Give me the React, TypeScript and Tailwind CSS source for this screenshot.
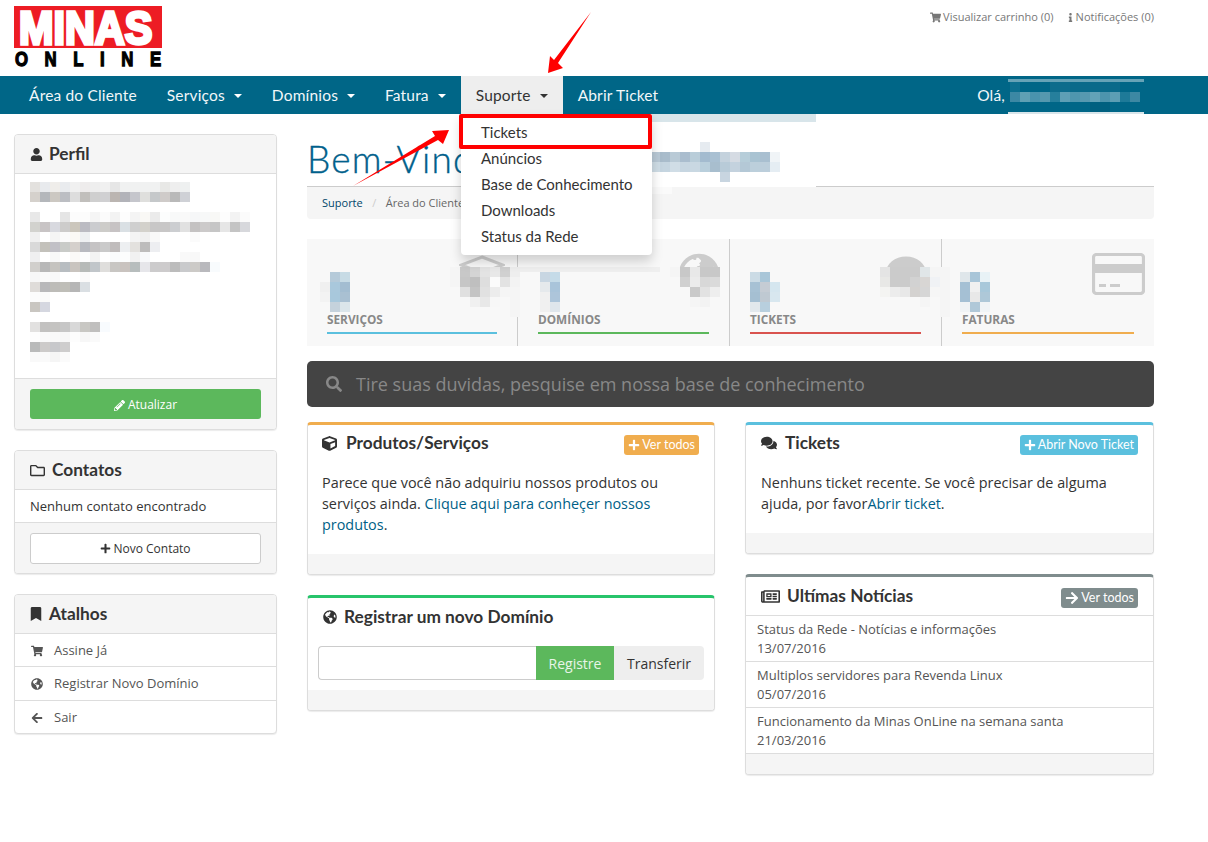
import React from "react";
import {
  FaUser, FaRegFolder, FaBookmark, FaShoppingCart, FaGlobeAmericas, FaArrowLeft, FaCube, FaComments,
  FaRegNewspaper, FaSearch, FaPlus, FaPencilAlt, FaArrowRight, FaInfo, FaComment,
} from "react-icons/fa";

type Cell = string;

function Mosaic({ rows, cell = 10, x, y }: { rows: Cell[][]; cell?: number; x?: number; y?: number }) {
  const w = Math.max(...rows.map((r) => r.length)) * cell;
  const pos = x !== undefined ? { left: x, top: y } : undefined;
  return (
    <svg width={w} height={rows.length * cell} className={pos ? "absolute block" : "block"} style={pos} shapeRendering="crispEdges">
      {rows.map((r, j) =>
        r.map((c, i) => (c ? <rect key={`${i}-${j}`} x={i * cell} y={j * cell} width={cell} height={cell} fill={`#${c}`} /> : null)),
      )}
    </svg>
  );
}

const s = (t: string) => (t ? t.split(" ").map((c) => (c === "-" ? "" : c)) : []);

const profile = [
  "e3e1de e8eaed efedea e9ebee f0f0f0 eeecec eeeeee f0f0f0 e6e6e6 f0f1f1 f0f1f1 f0f1f1 f0f1f1 e8e8e6 eeeeee eef0f0",
  "d5d1cc b4b7bb ccc8c2 bcbec3 dddddd c1bfbc cfcfcf d0d0d2 bbb5b1 b2b3b9 c5c6cc dfdfdd c5c8ca cfcbc9 b9b9b9 cfd1d6",
  "",
  "e8e8e8 - - e5e5e5 fcfcfc fcfcfc f5f5f5 fbfbfb f3f3f3 fdfdfd f4f4f4 f9f8f5 ebebeb fcfdfd f8f9f9 f9f9f9 f6f7f8 f7f8f8 f8f8f6 fdfdfd f3f3f3 fbfbfb",
  "d2d2ce c8c4c5 d8d9df cdcccb cbc6bc bbbbc2 cbcccf cdccc9 c7c3c4 dae0e4 cfcfcf d3d1cb c8c7c7 c8c7c7 ccced1 e1e1e1 c4c2c2 cccaca c6c6c6 e6e6e6 c4c4c4 d7d8dc",
  "f0f0f0 - f5f5f5 fbfbfb fbf9f5 eef0f2 - - - - f4f4f4 f0f0f0 f9f9f9 - - - fbfbfb",
  "d9d9d9 c3c1bb c1c0c6 c9cbc8 d5d0cc b8bac0 c5c3c4 cacaca c0bcbc edeff1 e3e1de bdbcbc edeef1",
  "efeff0 - f8f8f8 - fbf9f7 fcfdfd f3f3f3 - fafbfc fcfdfd f1f1f1 f8f9fb - - - f9f9f9 f8f8f8",
  "d1cfcc b8b8b8 c5c3bf b8bdc1 c9c4bf b6bab8 c1c6ca dfdedc c8c6c3 c9c3bf b7bdbd e6e6ea cccbcc cdcbcc bcbcbc c9cacc cccac7 b9b9bd f8fbfd",
  "f7f7f7 fafafa f9f9f9 - - fafafa",
  "dfdcd9 b8b8ba bdbcb8 bfbeb8 b6b6b6 dadfe3",
  "fcfcfc fafafa",
  "c9c6c1 d5d7e0",
  "",
  "e2e1e0 c2c1c0 c4c3c1 c6c6c6 d8d8d8 c8c7c3 c0bfbe f8fbfe",
  "fdfdfd fafafa f9f9f9 f7f7f7 fdfdfd f7f7f7 fafafa",
  "b9baba cdcbca c7c8cb cecdcd",
  "f9f9f9 fafafa f5f5f5 fbfbfb",
].map(s);

const F = "f8f8f8";
const overlays: { x: number; y: number; rows: string[] }[] = [
  { x: 320, y: 272, rows: ["- b5cad9 c7dbe5", "f0f0f0 a9c8dc a3bdd1", "f3f3f3 a8c8dc a9c0d2", "- c5d2dc dbe5ea"] },
  { x: 450, y: 267, rows: [`f5f5f5 c8c8c8 d4d4d4 e3e3e3 e8e8e8 d0d0d0 eeeeee`, `f5f5f5 c6c6c6 bfbfbf dedede fbfbfb e3e3e3 f3f3f3`, `${F} e0e0e0 c4c4c4 e1e1e1 ececec f5f5f5 f5f5f5`, `${F} ${F} f0f0f0 e8e8e8 f7f7f7 ${F} f5f5f5`, `${F} ${F} ${F} ${F} ${F} ${F} f5f5f5`] },
  { x: 540, y: 272, rows: ["c8d6e2 c5dbe8", "e5e9ec a9c4da", "f0f0f0 adc5da", "f0f0f0 dfe6ec"] },
  { x: 670, y: 267, rows: [`f5f5f5 c8c8c8 e8e8e8 c8c8c8 c8c8c8`, `${F} d0d0d0 ebebeb d8d8d8 dadada`, `${F} ${F} c9c9c9 e2e2e2 eeeeee`, `${F} ${F} f5f5f5 f3f3f3 ${F}`] },
  { x: 750, y: 272, rows: ["cbdbe5 a9c6d8", "a7c1d4 c5ccd4 d5e6ef", "a5bfd2 bfc9d2 d8e7ef", "e2e8ec b8cfde"] },
  { x: 880, y: 267, rows: [`e4e4e4 cbcbcb cbcbcb cbcbcb e0e6e8 f5f5f5 f5f5f5`, `e8e8e6 cbcbcb cbcbcb d2d2d2 d8d6d4 f0f2f5 f5f5f5`, `f4f4f2 ececec e8e8e8 d4d2d0 d6d6d6 f6f6f6 f5f5f5`, `${F} ${F} ${F} ${F} f5f5f5 ${F} f5f5f5`, `${F} ${F} ${F} ${F} ${F} ${F} f5f5f5`] },
  { x: 960, y: 272, rows: ["dfe6ea a8c5d8 e8f2f6", "a5c0d4 f0f0f0 a8c8da", "a5c0d4 e8e8e8 aec8d8", "f0f3f5 b0c8d8 f0f4f6"] },
];

const headingMosaic = [
  "- - - - - e6ebf0",
  "b9c9d6 a9bccb b9cad6 aabdce b9cdd9 a3bbcf a9c0d2 c4d2dd d5dbe3 b6cdd9 a9c3d2 a9bfd0 f0f4f7",
  "cfdde6 c5d5e0 d0dde6 c7d6e1 c9d8e2 b9cfdc a8bece b8cbd8 c4d2de b4c8d6 bccfdb bccedb e5edf3",
  "- - - - - - - c8d5e0",
].map(s);

const olaMosaic = [
  "0c6f8f - - - 0d6c8c 0d6c8c 0a6a8a 0a6a8a 0a6a8a 0a6a8a 0a6a8a",
  "3c88a4 5fa0b4 4a93ad 5598ae 267f9c 5e9fb5 4f96ae 5799b0 62a2b7 4d94ad 5c9eb4 1e7a98 3d88a3",
  "- - - - - - - - 006080 006080",
].map(s);

const Panel = ({ children, className = "" }: { children: React.ReactNode; className?: string }) => (
  <div className={`bg-white border border-[#ddd] rounded-[4px] shadow-[0_1px_1px_rgba(0,0,0,0.08)] overflow-hidden ${className}`}>{children}</div>
);

const SideHead = ({ icon, title, gap }: { icon: React.ReactNode; title: string; gap: string }) => (
  <div className={`h-[39px] bg-[#f5f5f5] border-b border-[#ddd] flex items-center pl-[15px] ${gap} text-[#333] font-bold text-[17.3px] font-['Lato','Liberation_Sans',sans-serif]`}>
    {icon}
    <span>{title}</span>
  </div>
);

const NavItem = ({ label, caret }: { label: string; caret?: boolean }) => (
  <div className="h-full flex items-center px-[15px] text-[#f2f7f9]">
    <span className="pt-[1px]">{label}</span>
    {caret && <span className="ml-[9px] mt-[2px] w-0 h-0 border-x-4 border-x-transparent border-t-4 border-t-white" />}
  </div>
);

const Tile = ({ label, bar, icon, line, width, pos }: { label: string; bar: string; icon: React.ReactNode; line: boolean; width: string; pos: string }) => (
  <div className={`relative ${width} flex flex-col justify-end px-[20px] pb-[12px] ${line ? "border-r border-[#ccc]" : ""}`}>
    <div className={`absolute ${pos} text-[#ccc]`}>{icon}</div>
    <div className="text-[11.8px] font-bold text-[#888] uppercase leading-[16px] mb-[5px]">{label}</div>
    <div className={`h-[2px] ${bar}`} />
  </div>
);

const BoxTitle = ({ icon, title }: { icon: React.ReactNode; title: string }) => (
  <div className="flex items-center text-[#333] font-bold text-[17.3px] leading-[20px] font-['Lato','Liberation_Sans',sans-serif]">
    {icon}
    <span>{title}</span>
  </div>
);

const SmallBtn = ({ icon, label, color }: { icon: React.ReactNode; label: string; color: string }) => (
  <div className={`mt-[2px] h-[20px] rounded-[3px] ${color} text-white text-[12.5px] flex items-center px-[4px] gap-[2px] font-['Lato','Liberation_Sans',sans-serif]`}>
    {icon}
    <span>{label}</span>
  </div>
);

const Shortcut = ({ icon, label, row }: { icon: React.ReactNode; label: string; row: string }) => (
  <div className={`${row} flex items-center pl-[16px] pt-[1px] text-[13px] text-[#555]`}>
    <span className="w-[23px] text-[#555]">{icon}</span>
    <span>{label}</span>
  </div>
);

const News = ({ title, date }: { title: string; date: string }) => (
  <div className="h-[46px] border-b border-[#ddd] pl-[11px] pt-[4px] text-[13px] leading-[19px] text-[#555]">
    <div>{title}</div>
    <div>{date}</div>
  </div>
);

export default function App() {
  return (
    <div className="relative w-[1208px] h-[842px] bg-white overflow-hidden font-['Open_Sans',sans-serif] text-[#333]">
      {/* top */}
      <header className="h-[76px] flex justify-between items-start pl-[14px] pr-[54px]">
        <svg width="180" height="74" viewBox="0 -6 180 74" className="block">
          <rect width="148" height="42" fill="#ed1c24" />
          <text transform="translate(5 38) scale(0.88 1)" fontFamily="Liberation Sans" fontWeight="700" fontSize="47" fill="#fff" stroke="#fff" strokeWidth="3.4">MINAS</text>
          <text transform="translate(1 60) scale(0.8 1)" fontFamily="Liberation Sans" fontWeight="700" fontSize="21" letterSpacing="20.7" fill="#000" stroke="#000" strokeWidth="1.3">ONLINE</text>
        </svg>
        <div className="flex items-center gap-[12px] pt-[9px] text-[11px] leading-[16px] text-[#777]">
          <span className="flex items-center gap-[2px]"><FaShoppingCart className="text-[11px]" />Visualizar carrinho (0)</span>
          <span className="flex items-center gap-[1px]"><FaInfo className="text-[9px]" />Notificações (0)</span>
        </div>
      </header>

      {/* nav */}
      <nav className="relative h-[38px] bg-[#006687] flex items-center text-[15.5px] font-['Lato','Liberation_Sans',sans-serif] tracking-[0.17px]">
        <div className="w-[14px]" />
        <NavItem label="Área do Cliente" />
        <NavItem label="Serviços" caret />
        <NavItem label="Domínios" caret />
        <NavItem label="Fatura" caret />
        <div className="relative h-full">
          <div className="h-full bg-[#eee] flex items-center px-[15px] text-[#333]">
            <span className="pt-[1px]">Suporte</span>
            <span className="ml-[9px] mt-[2px] w-0 h-0 border-x-4 border-x-transparent border-t-4 border-t-[#333]" />
          </div>
        </div>
        <NavItem label="Abrir Ticket" />
        <div className="ml-auto mr-[203px] pt-[1px] text-[#f2f7f9]">Olá,</div>
        <Mosaic x={1010} y={6} rows={olaMosaic} />
        <div className="absolute left-[1008px] top-[3px] w-[136px] h-[3px] bg-[#66a3b7]" />
        <div className="absolute left-[1008px] top-[36px] w-[136px] h-[2px] bg-[#d8e5ea]" />
      </nav>

      {/* body */}
      <div className="flex gap-[30px] pl-[14px] pr-[54px] pt-[20px]">
        <aside className="w-[263px] flex flex-col gap-[20px]">
          <Panel>
            <SideHead icon={<FaUser className="text-[13px]" />} title="Perfil" gap="gap-[6px]" />
            <div className="h-[204px] pt-[8px] pl-[15px]">
              <Mosaic rows={profile} />
            </div>
            <div className="h-[51px] bg-[#f5f5f5] border-t border-[#ddd] px-[15px] pt-[10px]">
              <div className="h-[30px] pt-[2px] rounded-[3px] bg-[#5cb85c] text-white text-[12px] flex items-center justify-center gap-[3px]"><FaPencilAlt className="text-[11px]" />Atualizar</div>
            </div>
          </Panel>
          <Panel>
            <SideHead icon={<FaRegFolder className="text-[15px]" />} title="Contatos" gap="gap-[7px]" />
            <div className="h-[32px] pl-[15px] pt-[1px] flex items-center text-[13px] text-[#333]">Nenhum contato encontrado</div>
            <div className="h-[51px] bg-[#f5f5f5] border-t border-[#ddd] px-[15px] pt-[10px]">
              <div className="h-[31px] rounded-[3px] bg-white border border-[#ccc] text-[12px] flex items-center justify-center gap-[2px]"><FaPlus className="text-[11px]" />Novo Contato</div>
            </div>
          </Panel>
          <Panel>
            <SideHead icon={<FaBookmark className="w-[12px] h-[14px]" />} title="Atalhos" gap="gap-[7px]" />
            <Shortcut icon={<FaShoppingCart className="text-[12px]" />} label="Assine Já" row="h-[33px] border-b border-[#ddd]" />
            <Shortcut icon={<FaGlobeAmericas className="text-[12px]" />} label="Registrar Novo Domínio" row="h-[34px] border-b border-[#ddd]" />
            <Shortcut icon={<FaArrowLeft className="text-[12px]" />} label="Sair" row="h-[32px]" />
          </Panel>
        </aside>

        <main className="flex-1">
          <h1 className="h-[53px] border-b border-[#ccc] text-[37px] leading-[50px] font-light text-[#00608b] [-webkit-text-stroke:0.35px_#00608b] font-['Lato','Liberation_Sans',sans-serif] tracking-[1.2px]">Bem-Vindo,</h1>
          <div className="h-[32px] bg-[#f5f5f5] rounded-b-[4px] flex items-center pl-[15px] text-[11px] text-[#666]">
            <span className="text-[#00466a]">Suporte</span>
            <span className="mx-[9.5px] text-[#ccc]">/</span>
            <span>Área do Cliente</span>
          </div>

          <div className="mt-[20px] h-[107px] bg-[#f8f8f8] flex">
            <Tile
              label="Serviços"
              bar="bg-[#5bc0de]"
              line
              width="w-[211px]"
              pos="left-[152px] top-[16px]"
              icon={
                <svg width="46" height="48" viewBox="0 0 46 48">
                  <polygon points="23,2 44,10 23,18 2,10" fill="none" stroke="#ccc" strokeWidth="3" />
                  <polygon points="2,12 21,20 21,46 2,36" fill="#ccc" />
                  <polygon points="44,12 25,20 25,46 44,36" fill="#ccc" />
                </svg>
              }
            />
            <Tile label="Domínios" bar="bg-[#5cb85c]" line width="w-[212px]" pos="right-[9px] top-[14px]" icon={<FaGlobeAmericas className="text-[42px]" />} />
            <Tile label="Tickets" bar="bg-[#d9534f]" line width="w-[212px]" pos="right-[15px] top-[15px]" icon={<FaComment className="text-[40px]" />} />
            <Tile
              label="Faturas"
              bar="bg-[#f0ad4e]"
              line={false}
              width="w-[212px]"
              pos="right-[9px] top-[14px]"
              icon={
                <svg width="53" height="42" viewBox="0 0 53 42">
                  <rect x="1.5" y="1.5" width="50" height="39" rx="3" fill="none" stroke="#ccc" strokeWidth="3.2" />
                  <rect x="2" y="11" width="49" height="9" fill="#ccc" />
                  <rect x="7" y="31" width="7" height="3" fill="#ccc" />
                  <rect x="18" y="31" width="10" height="3" fill="#ccc" />
                </svg>
              }
            />
          </div>

          <div className="mt-[15px] h-[46px] rounded-[5px] bg-[#444] flex items-center pl-[19px] text-[#888] text-[18px]">
            <FaSearch className="text-[16px] mr-[14px]" />
            <span>Tire suas duvidas, pesquise em nossa base de conhecimento</span>
          </div>

          <div className="mt-[15px] grid grid-cols-[408px_409px] gap-x-[30px] items-start">
            <div className="flex flex-col gap-[20px]">
              <Panel className="border-t-[3px] border-t-[#f0ad4e]">
                <div className="h-[129px] pl-[14px] pr-[15px] pt-[8px]">
                  <div className="flex justify-between items-start">
                    <BoxTitle icon={<FaCube className="text-[15px] mr-[9px]" />} title="Produtos/Serviços" />
                    <SmallBtn icon={<FaPlus className="text-[12px]" />} label="Ver todos" color="bg-[#f0ad4e]" />
                  </div>
                  <p className="mt-[17px] text-[14.4px] leading-[21px]">
                    Parece que você não adquiriu nossos produtos ou serviços ainda. <span className="text-[#005f87]">Clique aqui para conheçer nossos produtos</span>.
                  </p>
                </div>
                <div className="h-[20px] bg-[#f5f5f5]" />
              </Panel>
              <Panel className="border-t-[3px] border-t-[#27c46b]">
                <div className="h-[92px] px-[10px] pt-[9px]">
                  <div className="pl-[5px]">
                    <BoxTitle icon={<FaGlobeAmericas className="text-[14px] mr-[7px]" />} title="Registrar um novo Domínio" />
                  </div>
                  <div className="mt-[19px] flex h-[34px] text-[14px]">
                    <div className="flex-1 bg-white border border-[#ccc] border-r-0 rounded-l-[4px]" />
                    <div className="w-[78px] bg-[#5cb85c] text-[#e8f5e8] flex items-center justify-center">Registre</div>
                    <div className="w-[90px] bg-[#eee] rounded-r-[4px] flex items-center justify-center">Transferir</div>
                  </div>
                </div>
                <div className="h-[20px] bg-[#f5f5f5]" />
              </Panel>
            </div>

            <div className="flex flex-col gap-[20px]">
              <Panel className="border-t-[3px] border-t-[#5bc0de]">
                <div className="h-[108px] px-[15px] pt-[8px]">
                  <div className="flex justify-between items-start">
                    <BoxTitle icon={<FaComments className="text-[16px] mr-[8px]" />} title="Tickets" />
                    <SmallBtn icon={<FaPlus className="text-[12px]" />} label="Abrir Novo Ticket" color="bg-[#5bc0de]" />
                  </div>
                  <p className="mt-[17px] text-[14.4px] leading-[21px]">
                    Nenhuns ticket recente. Se você precisar de alguma ajuda, por favor<span className="text-[#005f87]">Abrir ticket</span>.
                  </p>
                </div>
                <div className="h-[20px] bg-[#f5f5f5]" />
              </Panel>
              <Panel className="border-t-[3px] border-t-[#7f8c8d]">
                <div className="h-[39px] border-b border-[#ddd] flex justify-between items-start px-[15px] pt-[9px]">
                  <BoxTitle icon={<FaRegNewspaper className="text-[19px] mr-[7px]" />} title="Ultímas Notícias" />
                  <SmallBtn icon={<FaArrowRight className="text-[14px]" />} label="Ver todos" color="bg-[#7f8c8d]" />
                </div>
                <News title="Status da Rede - Notícias e informações" date="13/07/2016" />
                <News title="Multiplos servidores para Revenda Linux" date="05/07/2016" />
                <News title="Funcionamento da Minas OnLine na semana santa" date="21/03/2016" />
                <div className="h-[20px] bg-[#f5f5f5]" />
              </Panel>
            </div>
          </div>
        </main>
      </div>

      {/* blurred name over the heading */}
      <div className="absolute left-[645px] top-[114px] w-[171px] h-[73px] bg-white">
        <div className="h-[8px] bg-[#d8e5ea]" />
      </div>
      <div className="absolute left-[652px] top-[187px] w-[20px] h-[7px] bg-[#fafafa]" />
      <Mosaic x={650} y={142} rows={headingMosaic} />

      {/* censored bits on the tiles */}
      <div className="absolute left-[517px] top-[267px] w-[143px] h-[5px] bg-[#efefef]" />
      {overlays.map((o) => (
        <Mosaic key={o.x} x={o.x} y={o.y} rows={o.rows.map(s)} />
      ))}

      {/* dropdown */}
      <div className="absolute left-[461px] top-[114px] w-[191px] h-[141px] bg-white rounded-b-[4px] shadow-[0_6px_12px_rgba(0,0,0,0.175)] py-[5px] text-[15px] leading-[26px] text-[#333] font-['Lato','Liberation_Sans',sans-serif]">
        <div className="pl-[20px]">Tickets</div>
        <div className="pl-[20px]">Anúncios</div>
        <div className="pl-[20px]">Base de Conhecimento</div>
        <div className="pl-[20px]">Downloads</div>
        <div className="pl-[20px]">Status da Rede</div>
      </div>
      <div className="absolute left-[459px] top-[114px] w-[193px] h-[35px] border-[4px] border-[#f00] rounded-[2px]" />

      {/* annotation arrows */}
      <svg width="1208" height="842" className="absolute left-0 top-0 pointer-events-none">
        <polygon points="591,12 558,63 563,68 548,73 550,56 554,60" fill="#f00" />
        <polygon points="353,186 435,136 432,131 449,130 443,144 438,140" fill="#f00" />
      </svg>
    </div>
  );
}
